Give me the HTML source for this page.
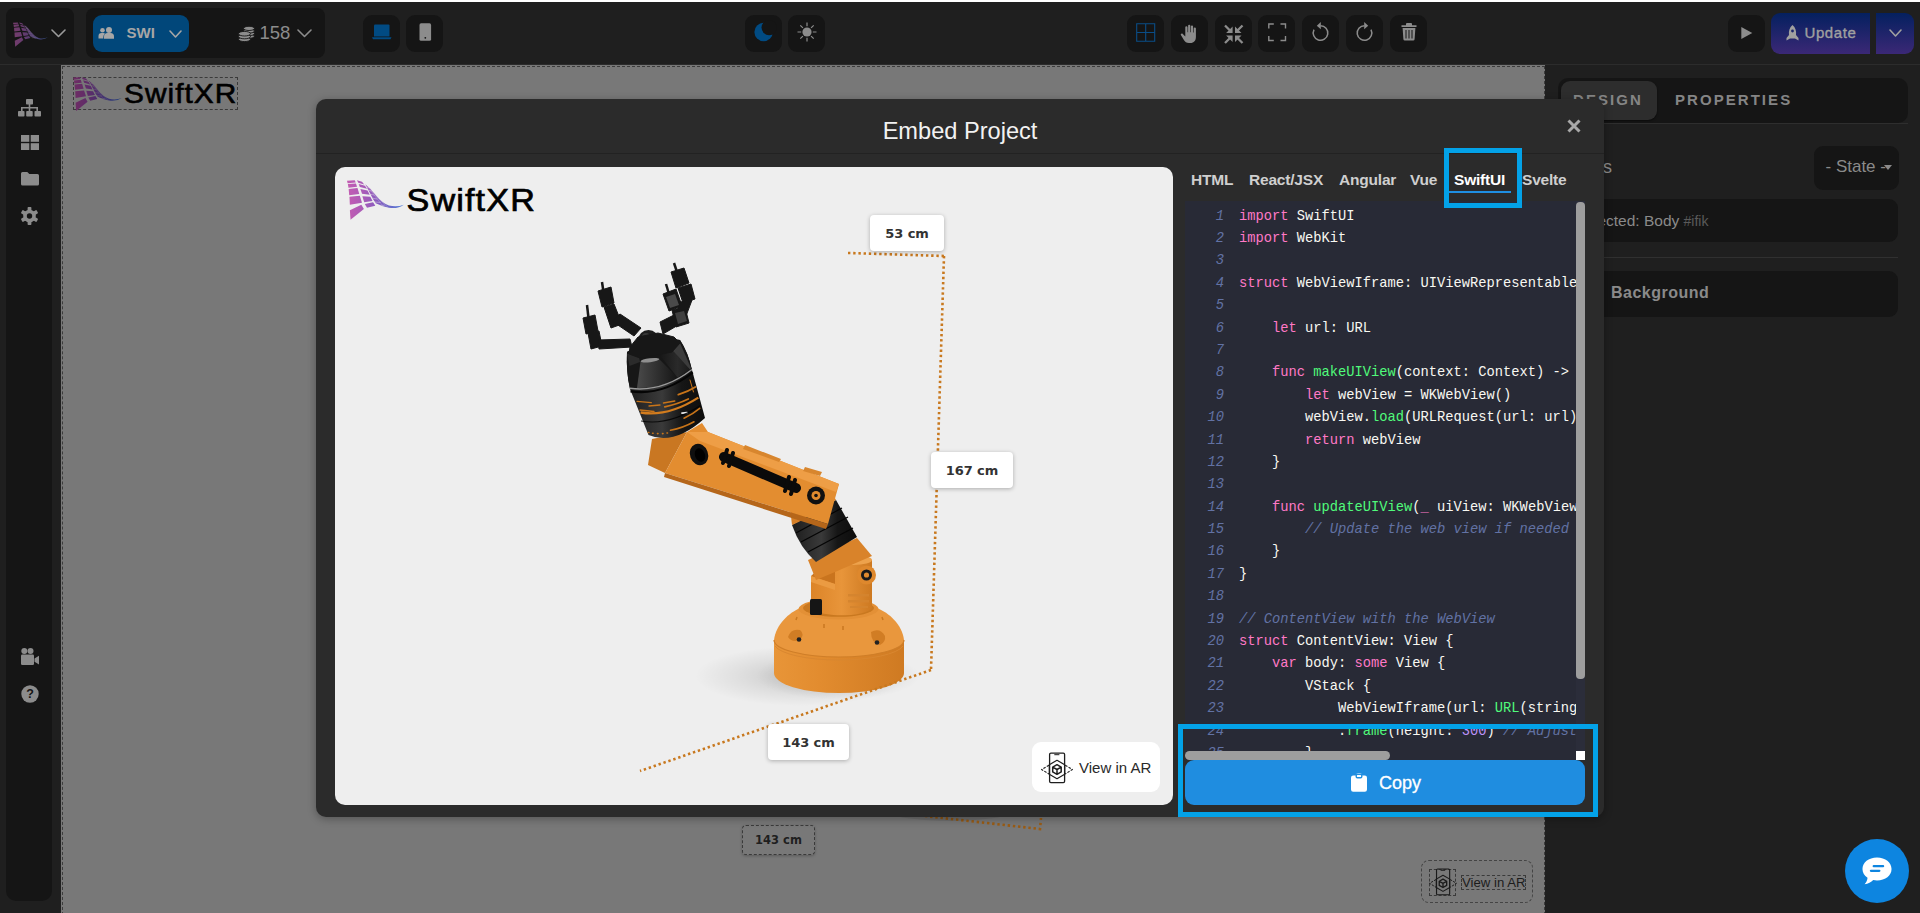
<!DOCTYPE html>
<html lang="en">
<head>
<meta charset="utf-8">
<title>SwiftXR Editor - Embed Project</title>
<style>
*{box-sizing:border-box;margin:0;padding:0}
html,body{width:1920px;height:913px;overflow:hidden;background:#1f1f1f;font-family:"Liberation Sans",sans-serif;color:#9a9a9a}
.abs{position:absolute}
#topline{left:0;top:0;width:1920px;height:2px;background:#fff}
#topbar{left:0;top:2px;width:1920px;height:63px;background:#1f1f1f;border-bottom:1px solid #2c2c2c}
.tb{position:absolute;background:#151515;border-radius:8px}
.ib{position:absolute;top:15px;width:36px;height:36px;background:#151515;border-radius:8px}
.ib svg{position:absolute;left:0;top:0;width:36px;height:36px}
#sidebar{left:6px;top:78px;width:46px;height:823px;background:#151515;border-radius:10px}
#sidebar svg{position:absolute}
#canvas{left:61px;top:65px;width:1484px;height:848px;background:#787878;overflow:hidden}
#canvas .dash{position:absolute;left:1px;top:1px;right:0;bottom:-2px;border:1px dashed #3c3c3c}
#right{left:1545px;top:65px;width:375px;height:848px;background:#1f1f1f}
#modal{left:316px;top:99px;width:1288px;height:718px;background:#2b2b2b;border-radius:10px;box-shadow:0 2px 8px rgba(0,0,0,.3)}
#mhead{left:0;top:0;width:1288px;height:55px;border-bottom:1px solid #222}
#mtitle{left:0;top:19px;width:1288px;text-align:center;font-size:23.600px;color:#f2f2f2;line-height:26px}
#preview{left:19px;top:68px;width:838px;height:638px;background:#eeeeee;border-radius:10px;overflow:hidden}
#code{left:869px;top:102px;width:400px;height:559px;background:#282a36;overflow:hidden}
#copy{left:869px;top:661px;width:400px;height:45px;background:#1f8de0;border-radius:9px;color:#fff}
.hl{position:absolute;border:5px solid #03a2e8}

#codein{position:absolute;left:0;top:4.600px;width:391px;height:547px;overflow:hidden;font-family:"Liberation Mono",monospace;font-size:13.75px;line-height:22.4px;color:#f8f8f2}
.ln{height:22.4px;position:relative}
.no{position:absolute;left:0;top:0;width:39px;text-align:right;color:#6272a4;font-style:italic}
.tx{position:absolute;left:54px;top:0;white-space:pre}
.k{color:#ff79c6}.f{color:#50fa7b}.c{color:#6272a4;font-style:italic}.n{color:#bd93f9}.s{color:#f1fa8c}
#vtrack{left:391px;top:0;width:9px;height:550px;background:#2b2d3a}
#vthumb{left:391px;top:1px;width:9px;height:477px;background:#9e9e9e;border-radius:4px}
#htrack{left:0;top:550px;width:391px;height:9px;background:#282a36}
#hthumb{left:0;top:550px;width:205px;height:9px;background:#9e9e9e;border-radius:5px}
#corner{left:391px;top:550px;width:9px;height:9px;background:#fff}

.tab{position:absolute;top:71px;font-size:15.5px;line-height:20px;font-weight:bold;color:#cfcfcf;white-space:nowrap;letter-spacing:-.2px}
.tab.on{color:#fff}
#tabline{left:1133px;top:92px;width:62px;height:2px;background:#1f8fe1}
#close{left:1250px;top:19px;width:16px;height:16px}

.lbl{position:absolute;height:36px;background:#fff;border-radius:4px;box-shadow:0 1px 4px rgba(0,0,0,.28);font-family:"DejaVu Sans","Liberation Sans",sans-serif;font-weight:bold;font-size:13px;line-height:37.5px;text-align:center;color:#333;letter-spacing:-.1px}
#arbtn{left:697px;top:575px;width:128px;height:50px;background:#fff;border-radius:9px}
#arbtn span{position:absolute;left:47px;top:16.500px;font-size:15px;line-height:18px;color:#2a2a2a;white-space:nowrap}

.ib{top:15px;width:37px;height:37px;border-radius:9px}
.ib svg{width:37px;height:37px}
#upd{left:1771px;top:13px;width:99px;height:41px;border-radius:9px 0 0 9px;background:linear-gradient(#04205f,#3b2876)}
#upd2{left:1876px;top:13px;width:38px;height:41px;border-radius:0 9px 9px 0;background:linear-gradient(#04205f,#3b2876)}

.rt{font-size:15px;line-height:18px;font-weight:bold;letter-spacing:2.050px;color:#858585;white-space:nowrap}
#chat{left:1844.500px;top:838.500px;width:64px;height:64px;border-radius:50%;background:#0d85e0}
</style>
</head>
<body>
<svg width="0" height="0" style="position:absolute">
<defs>
<linearGradient id="lgA" x1="70" x2="585" y1="0" y2="0" gradientUnits="userSpaceOnUse"><stop offset="0" stop-color="#c45db2"/><stop offset=".3" stop-color="#a85bb8"/><stop offset=".6" stop-color="#7d5cc0"/><stop offset="1" stop-color="#4f7fd8"/></linearGradient>
<symbol id="logo" viewBox="70 90 516 360">
<g fill="url(#lgA)">
<path d="M70 96 L140 92 L149 112 L76 119Z"/>
<path d="M78 126 L151 120 L161 150 L83 159Z"/>
<path d="M85 170 L165 162 L181 215 L90 226Z"/>
<path d="M92 241 L186 232 L206 294 L96 312Z"/>
<path d="M96 362 L200 312 L223 352 L102 449Z"/>
<path d="M160 92 L206 105 L226 129 L172 113Z"/>
<path d="M176 125 L233 141 L251 169 L186 152Z"/>
<path d="M191 170 L256 183 L276 222 L206 213Z"/>
<path d="M209 235 L281 241 L301 280 L226 291Z"/>
<path d="M231 306 L306 291 L326 322 L251 341Z"/>
<path d="M235 128 Q290 170 335 232 Q390 300 450 320 Q520 338 585 312 Q530 352 450 340 Q380 328 330 300 L305 262 L282 215 L258 170Z"/>
</g>
<g stroke="#eeeeee" stroke-width="5" fill="none" opacity=".75">
<path d="M240 150 L268 160 M254 178 L292 190 M272 215 L318 226 M292 252 L345 262 M314 288 L375 292 M345 318 L410 318"/>
<path d="M262 150 Q320 235 400 330 M290 180 Q350 265 440 335" stroke-width="3"/>
</g>
</symbol>
<symbol id="aricon" viewBox="0 0 32 32"><g fill="none" stroke="currentColor" stroke-linejoin="round"><rect x="8.600" y="1.100" width="15" height="29.500" rx="1.300" stroke-width="1.300"/><path d="M13.700 2.700 h4.300" stroke-width="1" stroke-linecap="round"/><path d="M16 8.300 L23.700 12.700 V22.300 L16 26.700 L8.300 22.300 V12.700z" stroke-width="1.200"/><path d="M16 12.700 L20.200 15.100 V19.900 L16 22.300 L11.700 19.900 V15.100z M11.700 15.100 L16 17.500 L20.200 15.100 M16 17.500 V22.300" stroke-width="1.500"/><path d="M8 13.200 L.6 17.500 L8 22 M24.200 13.200 L31.400 17.500 L24.200 22" stroke-width="1.100" stroke-dasharray="2.600 1.300"/></g></symbol>
</defs>
</svg>
<div id="topline" class="abs"></div>
<div id="topbar" class="abs"></div>

<div class="tb" style="left:6px;top:8px;width:68px;height:50px"></div>
<svg class="abs" style="left:13px;top:22px" width="35" height="25"><use href="#logo" width="35" height="25" opacity=".55"/></svg>
<svg class="abs" style="left:51px;top:29px" width="15" height="8.5" viewBox="0 0 15 8.5"><path d="M1 1 L7.5 7.5 L14 1" fill="none" stroke="#9a9a9a" stroke-width="1.6" stroke-linecap="round" stroke-linejoin="round"/></svg>
<div class="tb" style="left:86px;top:8px;width:239px;height:50px"></div>
<div class="tb" style="left:93px;top:15px;width:96px;height:37px;background:#01477a;border-radius:9px"></div>
<svg class="abs" style="left:98px;top:27px" width="17" height="13" viewBox="0 0 17 13"><g fill="#a6a6a6"><circle cx="4.500" cy="3.300" r="2.300"/><path d="M0.500 11.500 v-2.500 a3 3 0 0 1 3-3 h2 a3 3 0 0 1 1.500 .4 a5 5 0 0 0-1.700 3.800 v1.300z"/><circle cx="11" cy="3" r="3"/><path d="M6 11.800 v-2.300 a3.500 3.500 0 0 1 3.500-3.500 h3 a3.500 3.500 0 0 1 3.500 3.500 v2.300z"/></g></svg>
<span class="abs" style="left:126.500px;top:24px;font-size:15px;line-height:18px;font-weight:bold;color:#a6a6a6">SWI</span>
<svg class="abs" style="left:169px;top:30px" width="13" height="8" viewBox="0 0 13 8"><path d="M1 1 L6.5 7 L12 1" fill="none" stroke="#a6a6a6" stroke-width="1.6" stroke-linecap="round" stroke-linejoin="round"/></svg>
<svg class="abs" style="left:238px;top:25px" width="18" height="17" viewBox="0 0 18 17"><g fill="#8c8c8c" stroke="#151515" stroke-width=".9"><ellipse cx="11" cy="11.200" rx="5.500" ry="2.100"/><ellipse cx="11" cy="8.600" rx="5.500" ry="2.100"/><ellipse cx="11" cy="6" rx="5.500" ry="2.100"/><ellipse cx="11" cy="3.400" rx="5.500" ry="2.100"/><ellipse cx="6.500" cy="14.300" rx="6" ry="2.300"/><ellipse cx="6.500" cy="11.500" rx="6" ry="2.300"/><ellipse cx="6.500" cy="8.700" rx="6" ry="2.300"/></g></svg>
<span class="abs" style="left:259.500px;top:22.400px;font-size:18.500px;line-height:22px;color:#8c8c8c">158</span>
<svg class="abs" style="left:297px;top:29px" width="15" height="8.5" viewBox="0 0 15 8.5"><path d="M1 1 L7.5 7.5 L14 1" fill="none" stroke="#8c8c8c" stroke-width="1.6" stroke-linecap="round" stroke-linejoin="round"/></svg>
<div class="ib" style="left:363px"><svg viewBox="0 0 37 37"><path d="M11 10.500 a1 1 0 0 1 1-1 h13.500 a1 1 0 0 1 1 1 v11 h-15.500z" fill="#014b83"/><path d="M9 22.300 h19.500 l-1 2 h-17.500z" fill="#014b83"/></svg></div>
<div class="ib" style="left:406px"><svg viewBox="0 0 37 37"><rect x="13.500" y="8.300" width="11.600" height="17.500" rx="1.600" fill="#8c8c8c"/><circle cx="19.300" cy="22.800" r=".9" fill="#151515"/></svg></div>
<div class="ib" style="left:745px"><svg viewBox="0 0 37 37"><circle cx="18.600" cy="17" r="9.200" fill="#014b83"/><circle cx="24.200" cy="12.600" r="7.700" fill="#151515"/></svg></div>
<div class="ib" style="left:788px"><svg viewBox="0 0 37 37"><circle cx="19" cy="17" r="4.600" fill="#8c8c8c"/><path d="M19 7.500 v3.700 M19 22.800 v3.700 M9.500 17 h3.700 M24.800 17 h3.700 M12.300 10.300 l2.600 2.600 M23.100 21.100 l2.600 2.600 M25.700 10.300 l-2.600 2.600 M14.900 21.100 l-2.600 2.600" stroke="#8c8c8c" stroke-width="1.200"/></svg></div>
<div class="ib" style="left:1127px"><svg viewBox="0 0 37 37"><path d="M9.700 8.700 h18 v17.600 h-18z M18.700 8.700 v17.600 M9.700 17.500 h18" fill="none" stroke="#0a4d86" stroke-width="1.100"/></svg></div>
<div class="ib" style="left:1171px"><svg viewBox="0 0 37 37"><path d="M14.300 12.300 a1.100 1.100 0 0 1 2.200 0 v5 h.6 v-6.500 a1.100 1.100 0 0 1 2.200 0 v6.500 h.6 v-5.800 a1.100 1.100 0 0 1 2.200 0 v6 h.6 v-4 a1.100 1.100 0 0 1 2.200 0 v8.500 c0 3.500 -2 6 -5.500 6 h-1.500 c-2.500 0 -3.800 -1 -5 -3 l-3 -5 c-.6 -1.100 .9 -2.100 1.900 -1.100 l2.500 2.500z" fill="#8c8c8c"/></svg></div>
<div class="ib" style="left:1214.500px"><svg viewBox="0 0 37 37"><g stroke="#8c8c8c" stroke-width="2.300" fill="none"><path d="M10 10.500 l6 6 M27.500 10.500 l-6 6 M10 28 l6 -6 M27.500 28 l-6 -6"/></g><g fill="#8c8c8c"><path d="M17.600 11.500 v6.500 h-6.500z M20 11.500 v6.500 h6.500z M17.600 27 v-6.500 h-6.500z M20 27 v-6.500 h6.500z"/></g></svg></div>
<div class="ib" style="left:1258px"><svg viewBox="0 0 37 37"><path d="M10.800 13.500 v-4.500 h5 M22.500 9 h5 v4.500 M27.500 21 v4.500 h-5 M15.800 25.500 h-5 v-4.500" fill="none" stroke="#8c8c8c" stroke-width="1.400"/></svg></div>
<div class="ib" style="left:1302px"><svg viewBox="0 0 37 37"><path d="M18.500 10.700 a7.300 7.300 0 1 1 -6.500 4" fill="none" stroke="#8c8c8c" stroke-width="1.500"/><path d="M18.800 7 l-4 3.700 l4 3.600z" fill="#8c8c8c"/></svg></div>
<div class="ib" style="left:1346px"><svg viewBox="0 0 37 37"><path d="M18.500 10.700 a7.300 7.300 0 1 0 6.500 4" fill="none" stroke="#8c8c8c" stroke-width="1.500"/><path d="M18.200 7 l4 3.700 l-4 3.600z" fill="#8c8c8c"/></svg></div>
<div class="ib" style="left:1389.500px"><svg viewBox="0 0 37 37"><path d="M11.500 10.300 h15 v1.800 h-15z M16 9 a1 1 0 0 1 1-1 h4 a1 1 0 0 1 1 1 v1.300 h-6z M12.600 13 h12.800 l-.8 11.200 a1.500 1.500 0 0 1 -1.500 1.400 h-8.200 a1.500 1.500 0 0 1 -1.500 -1.400z" fill="#8c8c8c"/><path d="M16 15 v8.500 M19 15 v8.500 M22 15 v8.500" stroke="#151515" stroke-width="1"/></svg></div>
<div class="ib" style="left:1728px"><svg viewBox="0 0 37 37"><path d="M13.300 12 l11 6 l-11 6z" fill="#8c8c8c"/></svg></div>
<div class="abs" id="upd"><svg class="abs" style="left:15px;top:12px" width="13" height="16" viewBox="0 0 13 16"><path d="M6.500 0 C9.500 2.500 10.500 6 10 10 L12.500 13 L12.500 15.500 L9 13.500 H4 L0.500 15.500 L0.500 13 L3 10 C2.500 6 3.500 2.500 6.500 0z" fill="#a0a0a0"/><circle cx="6.500" cy="6" r="1.400" fill="#1a2468"/></svg><span class="abs" style="left:33.500px;top:11.300px;font-size:15px;line-height:18px;letter-spacing:.6px;color:#a0a0a0;-webkit-text-stroke:.35px #a0a0a0">Update</span></div>
<div class="abs" id="upd2"><svg class="abs" style="left:13px;top:16px" width="13" height="8" viewBox="0 0 13 8"><path d="M1 1 L6.5 7 L12 1" fill="none" stroke="#a0a0a0" stroke-width="1.6" stroke-linecap="round" stroke-linejoin="round"/></svg></div>

<div id="sidebar" class="abs">
<svg style="left:12px;top:21px" width="23" height="18" viewBox="0 0 23 18"><g fill="#8c8c8c"><rect x="8" y="0" width="7" height="5.500" rx=".8"/><rect x="0" y="12" width="6.500" height="5.500" rx=".8"/><rect x="8.200" y="12" width="6.500" height="5.500" rx=".8"/><rect x="16.500" y="12" width="6.500" height="5.500" rx=".8"/><path d="M10.700 5 h1.600 v3 h7.700 v4.500 h-1.600 v-3 h-6.100 v3 h-1.600 v-3 h-6.100 v3 h-1.600 v-4.500 h7.700z"/></g></svg>
<svg style="left:14.500px;top:57px" width="18" height="15" viewBox="0 0 18 15"><g fill="#8c8c8c"><rect x="0" y="0" width="8.300" height="6.800"/><rect x="9.700" y="0" width="8.300" height="6.800"/><rect x="0" y="8.200" width="8.300" height="6.800"/><rect x="9.700" y="8.200" width="8.300" height="6.800"/></g></svg>
<svg style="left:14.500px;top:93.500px" width="18" height="14" viewBox="0 0 18 14"><path d="M0 1.500 a1.500 1.500 0 0 1 1.500 -1.500 h4.800 l2 2 h8.200 a1.500 1.500 0 0 1 1.500 1.500 v8.500 a1.500 1.500 0 0 1 -1.500 1.500 h-15 a1.500 1.500 0 0 1 -1.500 -1.500z" fill="#8c8c8c"/></svg>
<svg style="left:14px;top:129px" width="19" height="18" viewBox="-9.500 -9 19 18"><g fill="#8c8c8c"><circle r="6.300"/><g id="tt"><rect x="-1.900" y="-9" width="3.800" height="18" rx=".8"/></g><use href="#tt" transform="rotate(60)"/><use href="#tt" transform="rotate(120)"/></g><circle r="2.700" fill="#151515"/></svg>
<svg style="left:14.500px;top:570px" width="18" height="17" viewBox="0 0 18 17"><g fill="#8c8c8c"><circle cx="3.300" cy="3" r="3"/><circle cx="9.500" cy="3" r="3"/><rect x="0" y="6.500" width="13" height="10.500" rx="1.200"/><path d="M13.500 10.500 l4.500 -2.800 v8.800 l-4.500 -2.800z"/></g></svg>
<svg style="left:14.500px;top:607px" width="18" height="18" viewBox="0 0 18 18"><circle cx="9" cy="9" r="8.700" fill="#8c8c8c"/><text x="9" y="13.300" text-anchor="middle" font-family="Liberation Sans, sans-serif" font-weight="bold" font-size="12.500" fill="#151515">?</text></svg>
</div>
<div id="canvas" class="abs"><div class="dash"></div>
<div class="abs" style="left:12px;top:12px;width:165px;height:33px;border:1px dashed #3a3a3a"></div>
<svg class="abs" style="left:12px;top:12px;filter:brightness(.52) saturate(1.25)" width="49" height="34"><use href="#logo" width="49" height="34"/></svg>
<svg class="abs" style="left:58px;top:8px" width="125" height="40"><text transform="translate(5 30) scale(1.085 1)" font-family="Liberation Sans, sans-serif" font-size="27.500" fill="#000" stroke="#000" stroke-width=".6" letter-spacing=".95">SwiftXR</text></svg>
<svg class="abs" style="left:830px;top:745px" width="170" height="30" viewBox="891 810 170 30"><path d="M925 816 L1040 829 L1041 818" fill="none" stroke="#9a5c14" stroke-width="2.600" stroke-dasharray="2.400 2.800"/><ellipse cx="950" cy="812" rx="60" ry="9" fill="#000" opacity=".08"/></svg>
<div class="abs" style="left:681px;top:760px;width:73px;height:30px;border:1px dashed #3a3a3a;border-radius:4px;box-shadow:0 1px 3px rgba(0,0,0,.25);font-family:'DejaVu Sans','Liberation Sans',sans-serif;font-weight:bold;font-size:11.500px;line-height:28px;text-align:center;color:#1f1f1f">143 cm</div>
<div class="abs" style="left:1360px;top:795px;width:112px;height:43px;border:1px dashed #444;border-radius:8px"></div>
<div class="abs" style="left:1368px;top:803.500px;width:27px;height:27px;border:1px dashed #3a3a3a"></div>
<svg class="abs" style="left:1367.500px;top:803px" width="28" height="28" viewBox="0 0 32 32"><use href="#aricon" width="32" height="32" color="#1a1a1a"/></svg>
<div class="abs" style="left:1400px;top:809.500px;width:65px;height:15px;border:1px dashed #3a3a3a;font-size:13.200px;line-height:13px;color:#1c1c1c;white-space:nowrap;padding-left:0;text-align:center">View in AR</div>
</div>
<div id="right" class="abs">
<div class="abs" style="left:13px;top:13px;width:350px;height:45px;background:#151515;border-radius:10px"></div>
<div class="abs" style="left:16px;top:16px;width:96px;height:39px;background:#2d2d2d;border-radius:9px;box-shadow:0 1px 2px rgba(0,0,0,.5)"></div>
<span class="abs rt" style="left:28px;top:26px">DESIGN</span>
<span class="abs rt" style="left:130px;top:26px">PROPERTIES</span>
<div class="abs" style="left:13px;top:58px;width:350px;height:1px;background:#2e2e2e"></div>
<span class="abs" style="left:3px;top:92px;font-size:18px;line-height:20px;color:#8a8a8a">Classes</span>
<div class="abs" style="left:269px;top:81px;width:85px;height:44px;background:#151515;border-radius:9px"></div>
<span class="abs" style="left:280.500px;top:92px;font-size:17px;line-height:20px;color:#8a8a8a;white-space:nowrap">- State -</span>
<svg class="abs" style="left:339px;top:100px" width="8" height="5"><path d="M0 0 h8 l-4 5z" fill="#8a8a8a"/></svg>
<div class="abs" style="left:15px;top:134px;width:338px;height:43px;background:#151515;border-radius:9px"></div>
<span class="abs" style="left:30px;top:146px;font-size:15.500px;line-height:20px;color:#8a8a8a;white-space:nowrap">Selected: Body <span style="color:#5a5a5a;font-size:14px">#ifik</span></span>
<div class="abs" style="left:15px;top:192px;width:338px;height:1px;background:#303030"></div>
<div class="abs" style="left:15px;top:206px;width:338px;height:46px;background:#151515;border-radius:9px"></div>
<span class="abs" style="left:66px;top:218px;font-size:16px;line-height:20px;font-weight:bold;letter-spacing:.5px;color:#8a8a8a">Background</span>
</div>
<div id="modal" class="abs">
  <div id="mhead" class="abs"></div>
  <div id="mtitle" class="abs">Embed Project</div>

  <div id="tabs" class="abs">
    <span class="tab" style="left:875px">HTML</span>
    <span class="tab" style="left:933px">React/JSX</span>
    <span class="tab" style="left:1023px">Angular</span>
    <span class="tab" style="left:1094px">Vue</span>
    <span class="tab on" style="left:1138px">SwiftUI</span>
    <span class="tab" style="left:1206px">Svelte</span>
    <div class="abs" id="tabline"></div>
  </div>
  <div id="close" class="abs"><svg width="16" height="16" viewBox="0 0 16 16"><path d="M2.5 2.5 L13.5 13.5 M13.5 2.5 L2.5 13.5" stroke="#a8a8a8" stroke-width="3" fill="none"/></svg></div>
  <div id="preview" class="abs">
<svg id="robot" class="abs" style="left:0;top:0" width="838" height="638" viewBox="335 167 838 638">
<defs>
<linearGradient id="gBase" x1="0" x2="1" y1="0" y2="0"><stop offset="0" stop-color="#e89538"/><stop offset=".35" stop-color="#e28c2f"/><stop offset="1" stop-color="#cf7a22"/></linearGradient>
<linearGradient id="gCol" x1="0" x2="1" y1="0" y2="0"><stop offset="0" stop-color="#dc8428"/><stop offset=".5" stop-color="#e8953a"/><stop offset="1" stop-color="#cd7921"/></linearGradient>
<linearGradient id="gBlk" x1="0" x2="1" y1="0" y2="0"><stop offset="0" stop-color="#1c1c1c"/><stop offset=".45" stop-color="#3a3a3a"/><stop offset=".7" stop-color="#161616"/><stop offset="1" stop-color="#0c0c0c"/></linearGradient>
<linearGradient id="gCone" x1="0" x2="1" y1="0" y2="0"><stop offset="0" stop-color="#4a4a4a"/><stop offset=".35" stop-color="#383838"/><stop offset="1" stop-color="#161616"/></linearGradient><linearGradient id="gCone2" x1="0" x2="1" y1="0" y2="0"><stop offset="0" stop-color="#161616"/><stop offset=".6" stop-color="#2a2a2a"/><stop offset="1" stop-color="#1a1a1a"/></linearGradient><radialGradient id="gSh" cx=".5" cy=".5" r=".5"><stop offset="0" stop-color="#000" stop-opacity=".16"/><stop offset=".6" stop-color="#000" stop-opacity=".06"/><stop offset="1" stop-color="#000" stop-opacity="0"/></radialGradient>
</defs>
<!-- floor shadow -->
<ellipse cx="800" cy="676" rx="105" ry="30" fill="url(#gSh)"/>
<ellipse cx="838" cy="676" rx="82" ry="24" fill="url(#gSh)"/>
<!-- base -->
<path d="M774 640 L774 673 A65 20 0 0 0 904 673 L904 640 Z" fill="url(#gBase)"/>
<path d="M774 640 C776 624 789 613 800 608 L877 608 C889 613 902 624 904 640 A65 17 0 0 1 774 640 Z" fill="#e9973d"/>
<path d="M774 640 A65 17 0 0 0 904 640" fill="none" stroke="#cf7e28" stroke-width="1.200"/>
<path d="M775 646 A65 17 0 0 0 903 646" fill="none" stroke="#d98730" stroke-width="1"/>
<ellipse cx="838.500" cy="609" rx="40" ry="10.500" fill="#e39036"/>
<ellipse cx="838.500" cy="608" rx="35.500" ry="8.800" fill="#c9781f"/>
<path d="M788 637 q3 -9 12 -7 q5 4 0 10 q-8 3 -12 -3z" fill="#d17d24"/>
<path d="M871 632 q9 -5 14 4 q1 6 -5 9 q-9 -2 -9 -13z" fill="#d17d24"/>
<circle cx="799" cy="639.500" r="2.300" fill="#222"/><circle cx="877" cy="642.500" r="2.300" fill="#222"/>
<path d="M824 624 v4 M843 626 v4 M797 617 l-1 3 M882 617 l1 3" stroke="#c97820" stroke-width="1.500"/>
<!-- column -->
<path d="M811 576 L811 608 A30 8 0 0 0 872 606 L872 560 L835 560 L835 576 Z" fill="url(#gCol)"/>
<ellipse cx="853.500" cy="560" rx="18.500" ry="5" fill="#eda24c"/>
<path d="M811 576 L835 584 L835 560 L822 566 Z" fill="#c9741e"/>
<path d="M811 576 L835 584 L835 590 L811 582Z" fill="#eb9b42"/>
<path d="M848 594 h21 v2.500 h-21z M848 600 h21 v2.500 h-21z M850 606 h18 v2 h-18z" fill="#d4842f" opacity=".9"/>
<rect x="810" y="599" width="12" height="16" rx="1.500" fill="#151515"/>
<circle cx="866.500" cy="575" r="9.500" fill="#de882d"/><circle cx="866.500" cy="575" r="5.500" fill="#1a1a1a"/><circle cx="866.500" cy="575" r="2.600" fill="#e08a2e"/>
<!-- lower neck orange -->
<path d="M808 560 L857 538 L872 556 L835 572 L816 580 Z" fill="#d9832a"/>
<!-- lower black joint -->
<path d="M792 525 L836 500 L857 537 L816 562 Q800 548 792 525Z" fill="url(#gBlk)"/>
<path d="M796 533 L842 508 M801 542 L848 517 M808 552 L853 528" stroke="#050505" stroke-width="1.300" fill="none"/>
<path d="M792 525 Q805 520 815 510 L836 500 L829 488 L790 508Z" fill="#d57f27"/>
<!-- upper arm box -->
<path d="M652 439 L687 432 L665 473 L648 465 Z" fill="#c97722"/>
<path d="M687 432 L702 423 L708 432 L839 484 L828 524 L665 473 Z" fill="#e38d30"/>
<path d="M687 432 L708 432 L839 484 L836 492 L700 441 Z" fill="#ee9e46"/>
<path d="M745 445 L781 459 L779 462 L743 449Z M805 467 L822 472 L820 476 L803 471Z" fill="#d8862e"/>
<path d="M665 473 L828 524 L826 529 L664 477Z" fill="#b5661a"/>
<ellipse cx="699" cy="454.500" rx="9" ry="11" fill="#0f0f0f" transform="rotate(-20 699 454.500)"/>
<ellipse cx="700" cy="455" rx="5" ry="7" fill="#000" transform="rotate(-20 700 455)"/>
<path d="M724 457 L796 488" stroke="#0a0a0a" stroke-width="10" stroke-linecap="round" fill="none"/>
<path d="M727 450 L723 463 M733 453 L729 466 M789 477 L785 491 M795 480 L791 494" stroke="#0a0a0a" stroke-width="4" stroke-linecap="round" fill="none"/>
<circle cx="816" cy="495.500" r="9" fill="#111"/><circle cx="816" cy="495.500" r="4.500" fill="#e08a2e"/><circle cx="816" cy="495.500" r="1.800" fill="#111"/>
<!-- black forearm cylinder -->
<path d="M627 352 Q626 372 630 389 L648.500 435 Q674 446 705 418 L692 370 Q688 352 680 340 Q652 334 627 352Z" fill="url(#gBlk)"/>
<path d="M627 352 Q626 372 630 389 Q662 393 692 370 Q688 352 680 340 Q652 334 627 352Z" fill="#171717"/>
<path d="M640.600 361.300 L659.100 359.100 L676.900 376.900 Q668 385 657 387.500 L637 388Z" fill="url(#gCone)"/>
<ellipse cx="650" cy="360.200" rx="9.400" ry="2" fill="#8f8f8f" transform="rotate(-7 650 360.200)"/>
<path d="M659.100 354.200 L672.600 350.600 L690 369.500 L677.500 377.500Z" fill="url(#gCone2)"/>
<path d="M627 354 L638 352 L640 362 L629.500 366Z" fill="#2b2b2b"/>
<path d="M672.600 350.600 L680 343 L691 368 L690 369.500Z" fill="#3c3c3c"/>
<path d="M630 388.300 Q662 392.500 692 369.500" stroke="#9a9a9a" stroke-width="1.400" fill="none"/>
<path d="M630.500 391.300 Q662.500 396 692.800 372.500" stroke="#050505" stroke-width="2.200" fill="none"/>
<path d="M640.600 412.500 Q668 417 698.300 397.600" stroke="#d27c1e" stroke-width="2.300" fill="none"/>
<g stroke="#c87419" stroke-width="1.300" fill="none" stroke-linecap="round">
<path d="M637 401.400 L651.300 402.600 M649 406 L660 405 M663.400 403 L674.800 401 M640 410 L654 411.500"/>
<path d="M664.800 406.800 Q678 404 688.300 399" stroke-width="1.800"/>
<path d="M678.300 394.700 Q688 391.500 695.400 386.900" stroke-width="1.800"/>
<path d="M684 418.200 Q693 414 699.700 408.300" stroke-width="1.600"/>
<path d="M670.500 430.300 Q683 428 694 421.800" stroke-width="1.600"/>
<path d="M648.400 432.500 h.5 M652.600 433.200 h.5 M657.500 433.600 h.5 M662.500 433.600 h.5 M667 433 h.5" stroke-width="1.600"/>
<path d="M690 380 L693.500 392" stroke-width="1"/>
</g>
<path d="M682 413.200 L687 412.600" stroke="#e8e8e8" stroke-width="1.800" stroke-linecap="round"/>
<path d="M641 421 Q669 426 700.500 405.500" stroke="#000" stroke-width="1.200" fill="none" opacity=".8"/>
<!-- wrist dome -->
<circle cx="648.500" cy="340.500" r="10.500" fill="#1d1d1d"/><circle cx="646" cy="337" r="4" fill="#383838"/>
<circle cx="646" cy="346" r="1.300" fill="#e08a2e"/>
<!-- fingers -->
<g fill="#171717" stroke="#171717" stroke-linejoin="round">
<path d="M587 305 L588.500 318" stroke-width="2.500"/>
<path d="M583 318 L595 315 L598 331 L586 334Z"/>
<path d="M588 333 L599 331 L602 346 L591 349Z"/>
<path d="M598 340 L630 339 L632 347 L599 349Z"/>
<path d="M602 282 L603.500 292" stroke-width="2.500"/>
<path d="M598 291 L611 287 L614 303 L602 307Z"/>
<path d="M604 307 L614 304 L622 324 L611 328Z"/>
<path d="M612 321 L620 314 L641 328 L634 336Z"/>
<path d="M666 284 L669 294" stroke-width="2.500"/>
<path d="M663 294 L676 289 L682 306 L669 311Z"/>
<path d="M672 310 L685 307 L689 323 L676 327Z"/>
<path d="M660 322 L676 314 L680 324 L663 334Z"/>
<path d="M674 263 L677 272" stroke-width="2.500"/>
<path d="M671 272 L684 268 L689 283 L676 288Z"/>
<path d="M678 288 L691 284 L695 299 L683 303Z"/>
<path d="M680 302 L692 300 L686 316 L676 316Z"/>
<path d="M630 347 L638 337 L658 333 L674 337 L680 343 L672 352 L640 358 L629 354Z"/>
</g>
<path d="M666 297 L675 294 L679 305 L670 308Z" fill="#4a4a4a"/>
<path d="M675 313 L684 311 L687 321 L678 324Z" fill="#3f3f3f"/>
<!-- dotted dimension lines -->
<g fill="none" stroke="#c8781e" stroke-width="2.600" stroke-dasharray="2.400 2.800">
<path d="M848 253 L944 256"/>
<path d="M944 256 L931 670"/>
<path d="M931 670 L640 771"/>
</g>
</svg>

<svg class="abs" style="left:12px;top:12.700px" width="57" height="40"><use href="#logo" width="57" height="40"/></svg>
<svg class="abs" style="left:66px;top:10px" width="140" height="44"><text transform="translate(5.500 33.500) scale(1.085 1)" font-family="Liberation Sans, sans-serif" font-size="31.500" fill="#000" stroke="#000" stroke-width=".7" letter-spacing="1.050">SwiftXR</text></svg>
<div class="lbl" style="left:535px;top:48px;width:74px">53 cm</div>
<div class="lbl" style="left:596px;top:285px;width:82px">167 cm</div>
<div class="lbl" style="left:433px;top:557px;width:81px">143 cm</div>
<div id="arbtn" class="abs"><svg class="abs" style="left:9px;top:9.500px" width="32" height="32"><use href="#aricon" width="32" height="32" color="#1e1e1e"/></svg><span>View in AR</span></div>
</div>
  <div id="code" class="abs"><div id="codein">
<div class="ln"><span class="no">1</span><span class="tx"><span class="k">import</span> SwiftUI</span></div>
<div class="ln"><span class="no">2</span><span class="tx"><span class="k">import</span> WebKit</span></div>
<div class="ln"><span class="no">3</span><span class="tx"></span></div>
<div class="ln"><span class="no">4</span><span class="tx"><span class="k">struct</span> WebViewIframe: UIViewRepresentable {</span></div>
<div class="ln"><span class="no">5</span><span class="tx"></span></div>
<div class="ln"><span class="no">6</span><span class="tx">    <span class="k">let</span> url: URL</span></div>
<div class="ln"><span class="no">7</span><span class="tx"></span></div>
<div class="ln"><span class="no">8</span><span class="tx">    <span class="k">func</span> <span class="f">makeUIView</span>(context: Context) -&gt; WKWebView {</span></div>
<div class="ln"><span class="no">9</span><span class="tx">        <span class="k">let</span> webView = WKWebView()</span></div>
<div class="ln"><span class="no">10</span><span class="tx">        webView.<span class="f">load</span>(URLRequest(url: url))</span></div>
<div class="ln"><span class="no">11</span><span class="tx">        <span class="k">return</span> webView</span></div>
<div class="ln"><span class="no">12</span><span class="tx">    }</span></div>
<div class="ln"><span class="no">13</span><span class="tx"></span></div>
<div class="ln"><span class="no">14</span><span class="tx">    <span class="k">func</span> <span class="f">updateUIView</span>(<span class="k">_</span> uiView: WKWebView, context: Context) {</span></div>
<div class="ln"><span class="no">15</span><span class="tx">        <span class="c">// Update the web view if needed</span></span></div>
<div class="ln"><span class="no">16</span><span class="tx">    }</span></div>
<div class="ln"><span class="no">17</span><span class="tx">}</span></div>
<div class="ln"><span class="no">18</span><span class="tx"></span></div>
<div class="ln"><span class="no">19</span><span class="tx"><span class="c">// ContentView with the WebView</span></span></div>
<div class="ln"><span class="no">20</span><span class="tx"><span class="k">struct</span> ContentView: View {</span></div>
<div class="ln"><span class="no">21</span><span class="tx">    <span class="k">var</span> body: <span class="k">some</span> View {</span></div>
<div class="ln"><span class="no">22</span><span class="tx">        VStack {</span></div>
<div class="ln"><span class="no">23</span><span class="tx">            WebViewIframe(url: <span class="f">URL</span>(string: <span class="s">"swiftxr.site/robot-arm"</span>)!)</span></div>
<div class="ln"><span class="no">24</span><span class="tx">            .<span class="f">frame</span>(height: <span class="n">300</span>) <span class="c">// Adjust height as needed</span></span></div>
<div class="ln"><span class="no">25</span><span class="tx">        }</span></div>
<div class="ln"><span class="no">26</span><span class="tx">    }</span></div>
</div>
<div id="vtrack" class="abs"></div><div id="vthumb" class="abs"></div><div id="htrack" class="abs"></div><div id="hthumb" class="abs"></div><div id="corner" class="abs"></div></div>
  <div id="copy" class="abs"><svg class="abs" style="left:165.500px;top:13px" width="16" height="19" viewBox="0 0 16 19"><path d="M2.2 2.6h2.6a3.2 2.6 0 0 1 6.4 0h2.6a2.2 2.2 0 0 1 2.2 2.2v11.8a2.2 2.2 0 0 1-2.2 2.2H2.2A2.2 2.2 0 0 1 0 16.600V4.800a2.200 2.200 0 0 1 2.200-2.200z" fill="#fff"/><rect x="5.200" y="1.200" width="5.600" height="3.600" rx="1.200" fill="#fff" stroke="#1f8fe1" stroke-width="1.400"/></svg><span class="abs" style="left:194px;top:11.600px;font-size:18px;line-height:22px;-webkit-text-stroke:.3px #fff">Copy</span></div>
  <div class="hl" style="left:1128px;top:49px;width:78px;height:60px"></div>
  <div class="hl" style="left:862px;top:625px;width:420px;height:93px"></div>
</div>
<div id="chat" class="abs"><svg class="abs" style="left:16px;top:17.500px" width="32" height="30" viewBox="0 0 34 32"><path d="M17 1.500 C26 1.500 32.500 6.800 32.500 13.800 C32.500 20.800 26 26 17 26 C15.600 26 14.300 25.900 13 25.600 C10.800 28 7.500 29.800 3.800 30.200 C5.600 28.300 6.700 25.800 6.900 23.300 C3.500 21 1.500 17.600 1.500 13.800 C1.500 6.800 8 1.500 17 1.500z" fill="#fff"/><path d="M13.500 10.800 h10 M10.500 15.800 h9" stroke="#0d85e0" stroke-width="2.400" stroke-linecap="round"/></svg></div>
</body>
</html>
